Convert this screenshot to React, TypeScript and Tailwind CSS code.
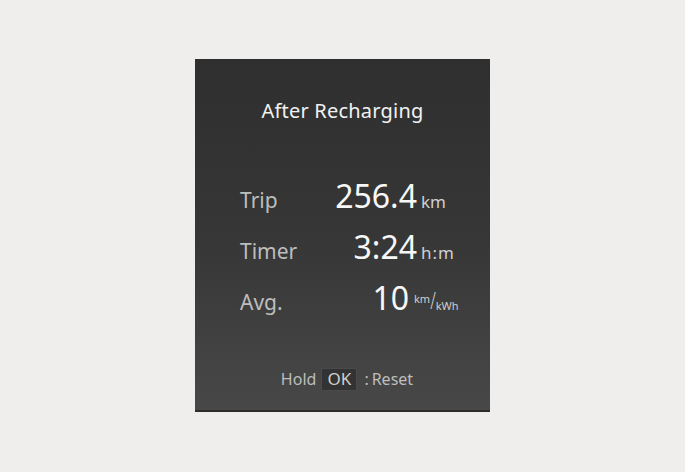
const font = { fontFamily: '"Noto Sans", "Open Sans", sans-serif' };

function StatRow({ label, value, children }: { label: string; value: string; children: React.ReactNode }) {
  return (
    <div className="flex h-[51px] items-baseline leading-none">
      <span className="flex-1 text-[21px] text-[#bdbdbd]">{label}</span>
      <span className="text-[32px] text-[#f7f7f7]">{value}</span>
      {children}
    </div>
  );
}

export default function App() {
  return (
    <div className="min-h-[472px] w-full bg-[#efeeec] pt-[59px]" style={font}>
      <div className="ml-[195px] flex h-[353px] w-[295px] flex-col border-b-2 border-b-[#2c2c2c] bg-linear-to-b from-[#2f2f2f] via-[#363636] to-[#484848]">
        <div className="pt-[38px] text-center text-[20px] leading-[28px] tracking-[0.2px] text-[#f2f2f2]">After Recharging</div>

        <div className="mt-[55px] pl-[45px] pr-[35px]">
          <StatRow label="Trip" value="256.4">
            <span className="ml-[4px] w-[34px] text-[17px] text-[#cfcfcf]">km</span>
          </StatRow>
          <StatRow label="Timer" value="3:24">
            <span className="ml-[4px] w-[34px] text-[17px] tracking-[1px] text-[#cfcfcf]">h:m</span>
          </StatRow>
          <StatRow label="Avg." value="10">
            <span className="ml-[5px] flex w-[41px] items-baseline whitespace-nowrap text-[#cfcfcf]">
              <span className="relative -top-[7px] text-[11px]">km</span>
              <span className="inline-block origin-bottom scale-y-150 text-[16px] font-light">/</span>
              <span className="text-[11px]">kWh</span>
            </span>
          </StatRow>
        </div>

        <div className="mt-auto mb-[19px] flex items-center justify-center pl-[9px] text-[16px] text-[#bdbdbd]">
          <span>Hold</span>
          <span className="ml-[5px] flex h-[23px] w-[36px] items-center justify-center rounded-[2px] border border-[#4a4a4a] bg-[#333333] text-[17px] text-[#d0d0d0]">
            OK
          </span>
          <span className="ml-[7px]">:</span>
          <span className="ml-[3px]">Reset</span>
        </div>
      </div>
    </div>
  );
}
